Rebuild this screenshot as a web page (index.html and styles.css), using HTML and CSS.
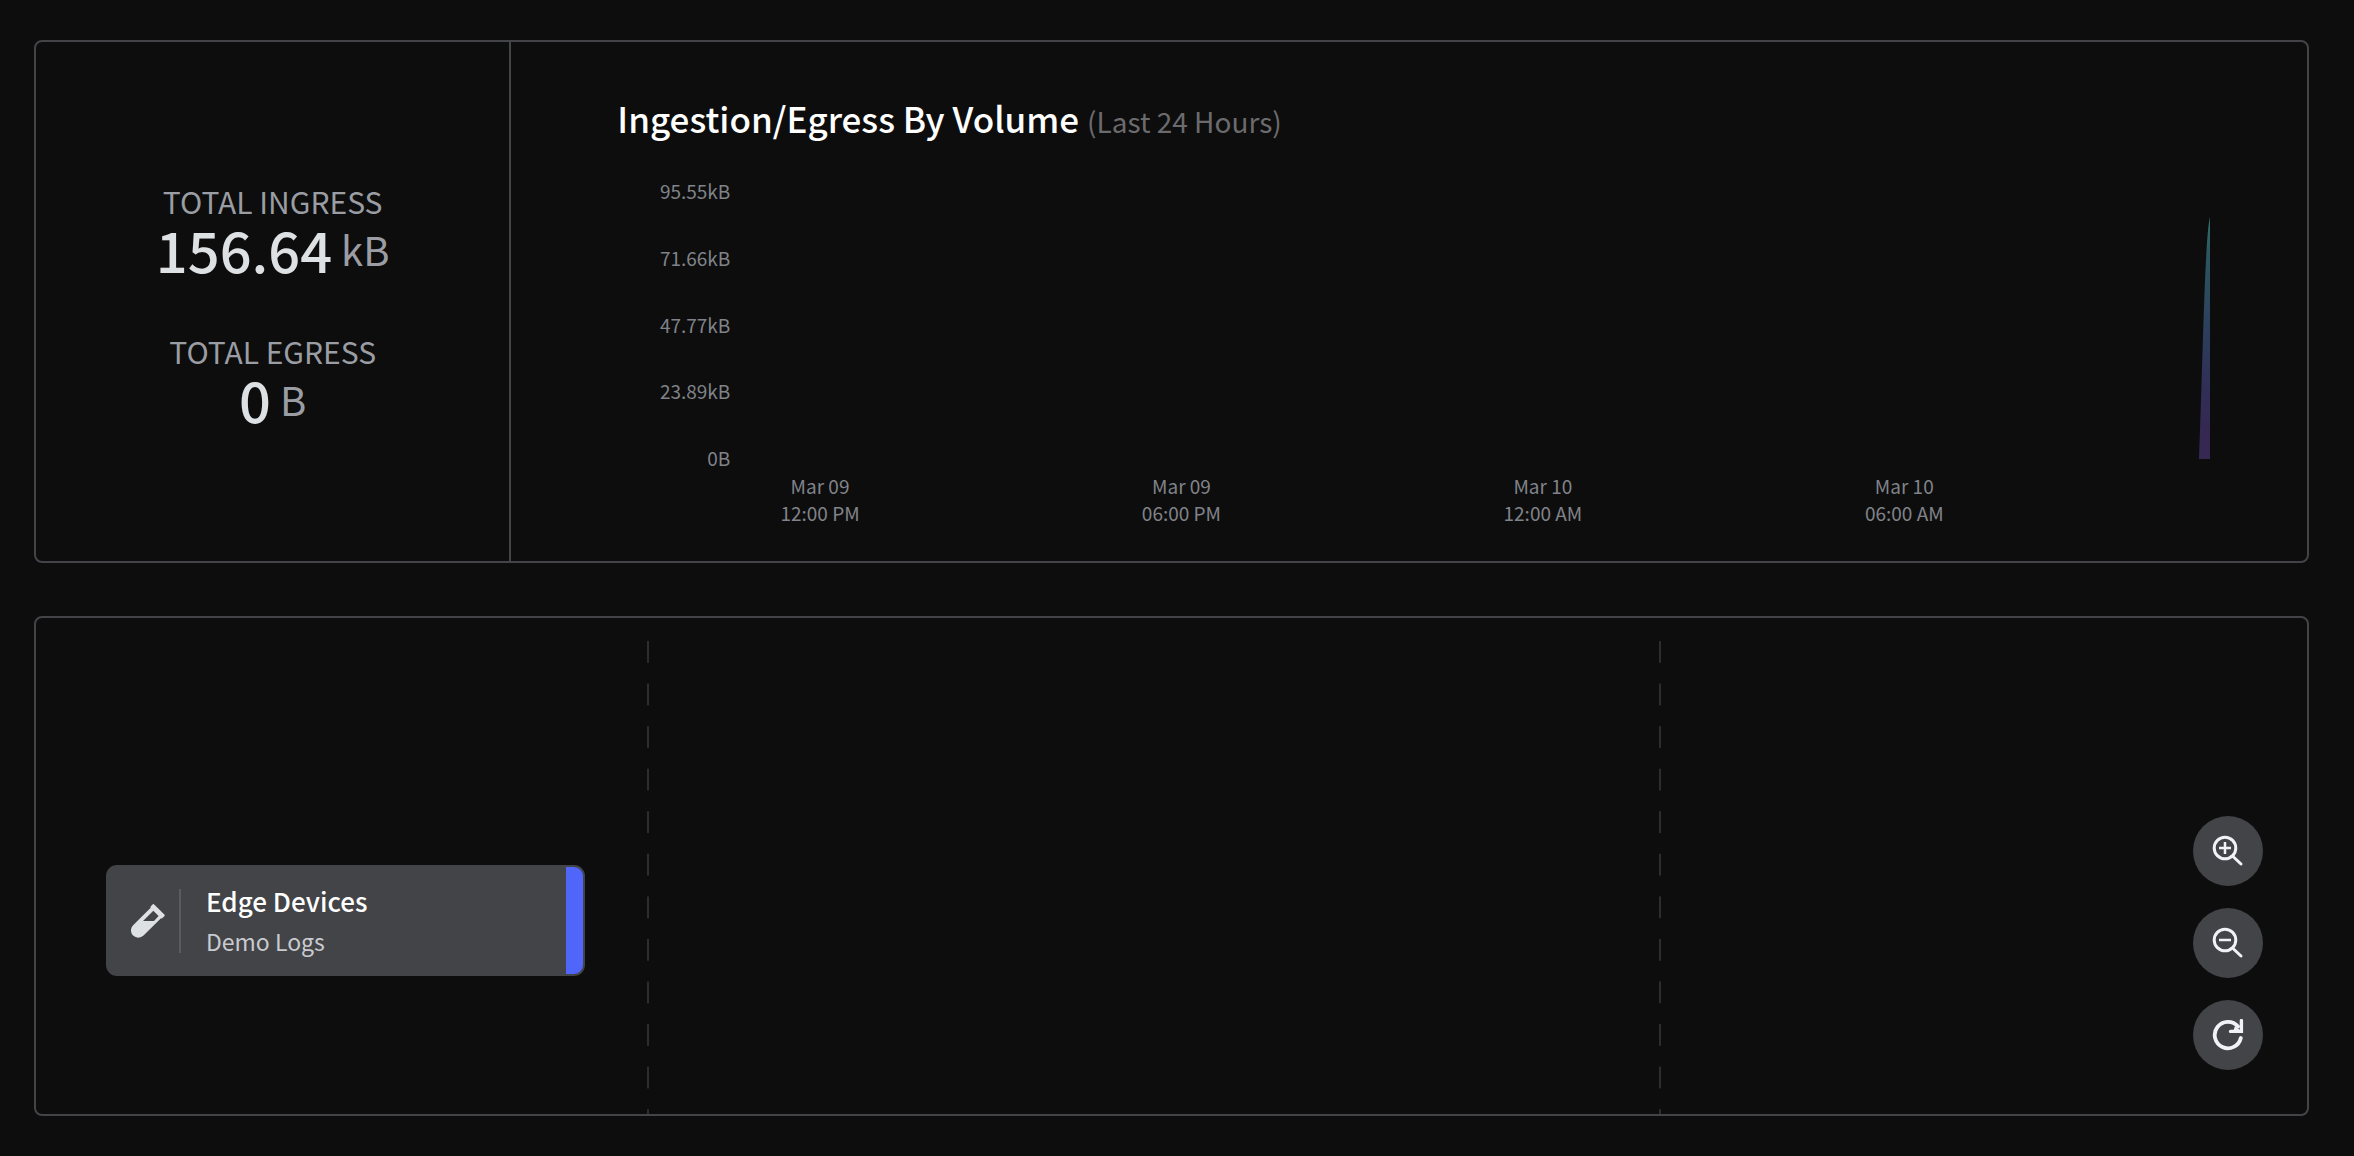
FILE: index.html
```html
<!DOCTYPE html>
<html lang="en">
<head>
<meta charset="utf-8">
<title>Pipeline overview</title>
<link rel="stylesheet" href="styles.css">
</head>
<body>
<main class="page">
  <section class="panel summary">
    <div class="totals">
      <div class="total">
        <div class="total-label">TOTAL INGRESS</div>
        <div class="total-value"><span class="total-number">156.64</span><span class="total-unit">kB</span></div>
      </div>
      <div class="total">
        <div class="total-label">TOTAL EGRESS</div>
        <div class="total-value"><span class="total-number">0</span><span class="total-unit">B</span></div>
      </div>
    </div>
    <div class="volume">
      <h2 class="volume-title">Ingestion/Egress By Volume <span class="volume-range">(Last 24 Hours)</span></h2>
      <div class="chart">
        <div class="y-axis">
          <span>95.55kB</span><span>71.66kB</span><span>47.77kB</span><span>23.89kB</span><span>0B</span>
        </div>
        <div class="plot">
          <svg class="spike" viewBox="0 0 12 242" aria-hidden="true">
            <defs>
              <linearGradient id="volume-fill" x1="0" y1="0" x2="0" y2="1">
                <stop offset="0" stop-color="#31706b"/>
                <stop offset="0.15" stop-color="#2c5660"/>
                <stop offset="0.45" stop-color="#2c405c"/>
                <stop offset="0.7" stop-color="#302f57"/>
                <stop offset="0.88" stop-color="#352853"/>
                <stop offset="1" stop-color="#352853"/>
              </linearGradient>
            </defs>
            <path d="M0 242C3.500 160 5.500 20 11 0V242Z" fill="url(#volume-fill)"/>
          </svg>
        </div>
      </div>
      <div class="x-axis">
        <span>Mar 09<br>12:00 PM</span>
        <span>Mar 09<br>06:00 PM</span>
        <span>Mar 10<br>12:00 AM</span>
        <span>Mar 10<br>06:00 AM</span>
      </div>
    </div>
  </section>

  <section class="panel lanes">
    <div class="lane lane-sources">
      <a class="node" href="#edge-devices">
        <svg class="node-icon" viewBox="0 0 34 34" aria-hidden="true">
          <path fill="#dde1e4" fill-rule="evenodd" d="M21.5 0.5a1.2 1.2 0 0 1 1.7 0L33.300 10.600a1.200 1.200 0 0 1 0 1.700L31.500 14.100a1.200 1.200 0 0 1-1.500 0.200L12.500 31.600a7.300 7.300 0 0 1-10.400-10.400L19.700 3.800a1.200 1.200 0 0 1 0.200-1.600ZM22.300 6.700L12 17H23L27.600 12Z"/>
        </svg>
        <span class="node-text">
          <span class="node-name">Edge Devices</span>
          <span class="node-type">Demo Logs</span>
        </span>
        <span class="node-port"></span>
      </a>
    </div>
    <div class="lane"></div>
    <div class="lane lane-destinations">
      <button class="control" type="button" aria-label="Zoom in">
        <svg class="control-icon" viewBox="0 0 32 32" fill="none" stroke="#f1f2f8" aria-hidden="true">
          <circle cx="13" cy="13" r="10.800" stroke-width="3"/>
          <path stroke-width="3" stroke-linecap="round" d="M21 21.500L29 29"/>
          <path stroke-width="2.500" d="M13 7V19M7 13H19"/>
        </svg>
      </button>
      <button class="control" type="button" aria-label="Zoom out">
        <svg class="control-icon" viewBox="0 0 32 32" fill="none" stroke="#f1f2f8" aria-hidden="true">
          <circle cx="13" cy="13" r="10.800" stroke-width="3"/>
          <path stroke-width="3" stroke-linecap="round" d="M21 21.500L29 29"/>
          <path stroke-width="2.500" d="M7 13H19"/>
        </svg>
      </button>
      <button class="control" type="button" aria-label="Reset view">
        <svg class="control-icon" viewBox="0 0 32 32" fill="none" stroke="#f1f2f8" stroke-linecap="round" aria-hidden="true">
          <path stroke-width="3.800" d="M28.800 19A13.200 13.200 0 1 1 26 7.500"/>
          <path stroke-width="3.400" stroke-linejoin="miter" d="M29.400 1.600V12.400H18.500"/>
          <path stroke="none" fill="#f1f2f8" d="M23 7L29.500 12.400L21 12.800Z"/>
        </svg>
      </button>
    </div>
  </section>
</main>
</body>
</html>
```
FILE: styles.css
```css
* {
  box-sizing: border-box;
}

body {
  margin: 0;
  background: #0d0d0d;
  color: #dde1e4;
  font-family: "Noto Sans CJK SC", "Noto Sans", sans-serif;
}

.page {
  display: flex;
  flex-direction: column;
  gap: 53px;
  min-height: 100vh;
  padding: 40px 45px 40px 34px;
}

.panel {
  border: 2px solid #434448;
  border-radius: 8px;
}

/* Totals and chart */
.summary {
  display: grid;
  grid-template-columns: 9fr 34fr;
}

.totals {
  display: flex;
  flex-direction: column;
  justify-content: center;
  gap: 54px;
  border-right: 2px solid #434448;
  text-align: center;
}

.total-label {
  color: #9a9da3;
  font-size: 30px;
  line-height: 44px;
}

.total-value {
  display: flex;
  align-items: center;
  justify-content: center;
  gap: 9px;
  line-height: 52px;
}

.total-number {
  font-size: 56px;
  font-weight: 500;
}

.total-unit {
  color: #9a9da3;
  font-size: 40px;
}

.volume {
  padding: 49px 72px 35px 106px;
}

.volume-title {
  margin: 0 0 29px;
  color: #fff;
  font-size: 35px;
  font-weight: 500;
  line-height: 54px;
}

.volume-range {
  color: #6b6b6d;
  font-size: 28px;
  font-weight: 400;
}

.chart {
  display: flex;
  gap: 10px;
  height: 294px;
}

.y-axis {
  display: flex;
  flex-direction: column;
  justify-content: space-between;
  width: 113px;
  color: #808389;
  font-size: 19px;
  line-height: 27px;
  text-align: right;
}

.plot {
  display: flex;
  flex: 1;
  align-items: flex-end;
  justify-content: flex-end;
  padding: 0 24px 12px 0;
}

.spike {
  width: 12px;
  height: 242px;
}

.x-axis {
  display: grid;
  grid-template-columns: repeat(4, 1fr);
  padding: 1px 150px 0 22px;
  color: #808389;
  font-size: 19px;
  line-height: 27px;
  text-align: center;
}

/* Pipeline lanes */
.lanes {
  display: grid;
  flex: 1;
  grid-template-columns: 37fr 61fr 39fr;
  padding-top: 23px;
}

.lane {
  display: flex;
  background: linear-gradient(#2d2d2f 50%, transparent 50%) right top / 2px 9% repeat-y;
}

.lane-sources {
  align-items: flex-end;
  padding: 0 64px 138px 70px;
}

.node {
  display: flex;
  flex: 1;
  align-items: center;
  height: 111px;
  border: 2px solid #434447;
  border-radius: 11px;
  padding-left: 23px;
  background: #434447;
  overflow: hidden;
  color: #fff;
  text-decoration: none;
}

.node-icon {
  width: 34px;
  height: 34px;
}

.node-text {
  display: flex;
  flex: 1;
  flex-direction: column;
  justify-content: center;
  height: 64px;
  margin-left: 14px;
  border-left: 2px solid #5a5b5f;
  padding-left: 25px;
}

.node-name {
  font-size: 26px;
  font-weight: 500;
  line-height: 41px;
}

.node-type {
  color: #c9cbd0;
  font-size: 23px;
  line-height: 41px;
}

.node-port {
  align-self: stretch;
  width: 17px;
  background: #5065f9;
}

.lane-destinations {
  flex-direction: column;
  align-items: flex-end;
  justify-content: flex-end;
  gap: 22px;
  padding: 0 44px 44px;
  background: none;
}

.control {
  display: flex;
  align-items: center;
  justify-content: center;
  width: 70px;
  height: 70px;
  border: 0;
  border-radius: 50%;
  padding: 0;
  background: #434448;
  cursor: pointer;
}

.control-icon {
  width: 32px;
  height: 32px;
}
```
